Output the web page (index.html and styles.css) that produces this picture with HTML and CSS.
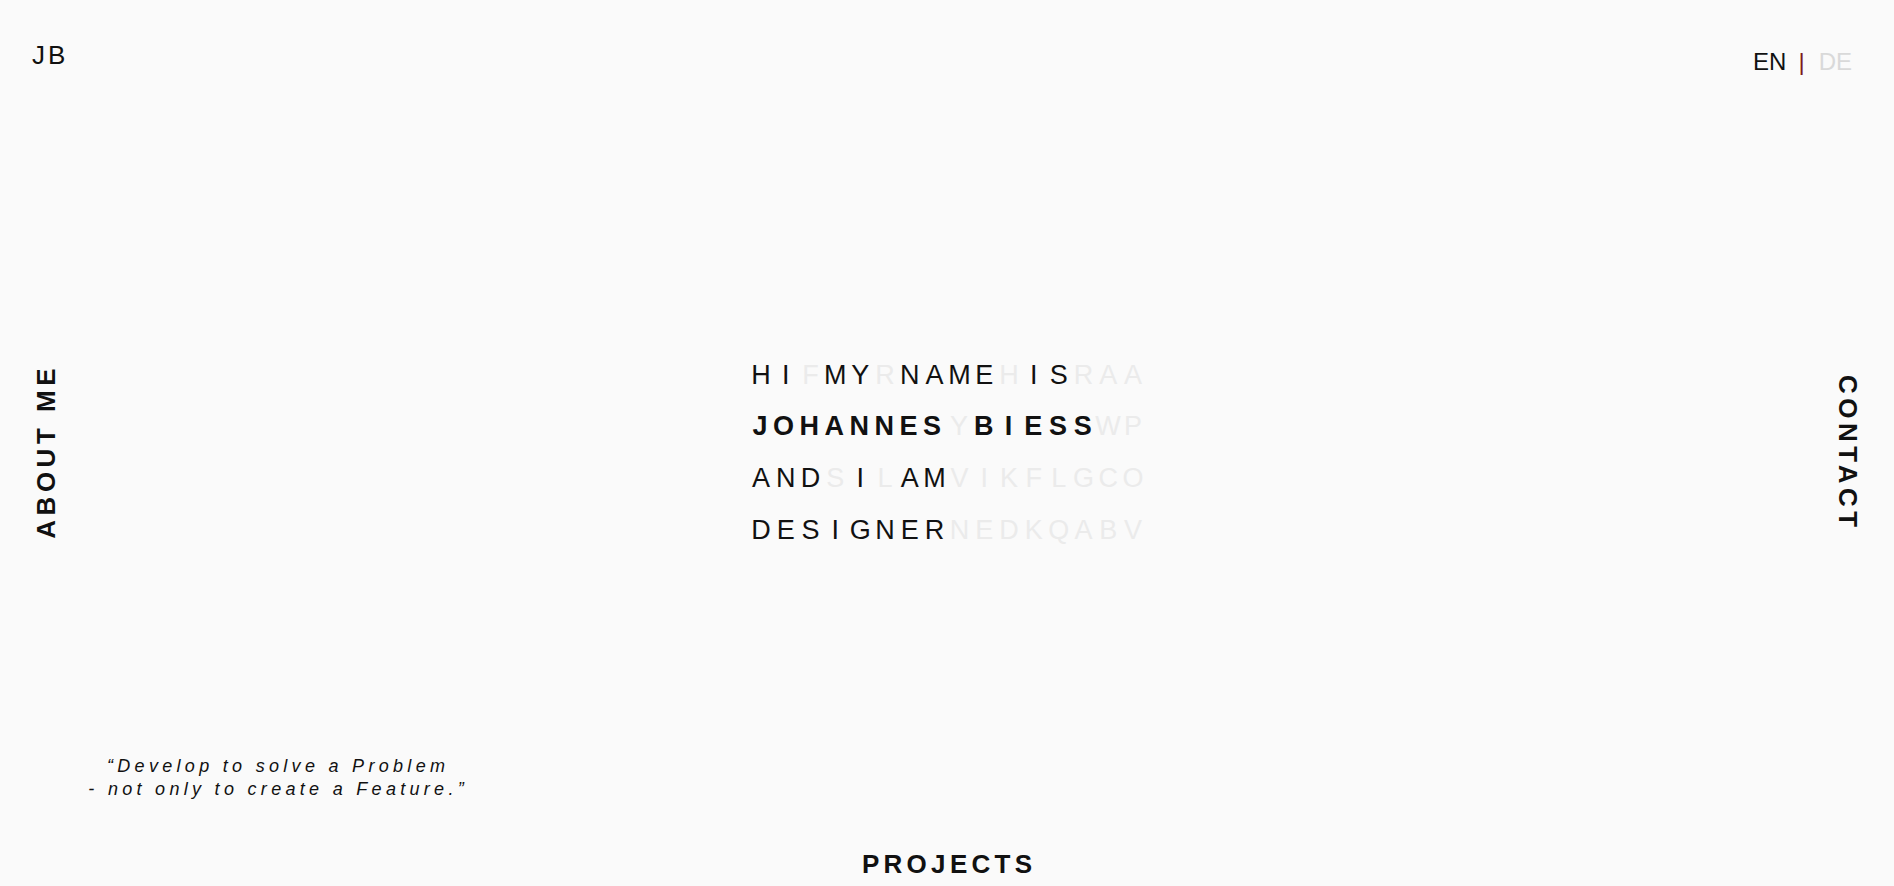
FILE: index.html
```html
<!DOCTYPE html>
<html lang="en">
<head>
<meta charset="utf-8">
<title>Johannes Biess</title>
<link rel="stylesheet" href="styles.css">
</head>
<body>
<div class="page">
  <header class="topbar">
    <a class="logo" href="#">JB</a>
    <div class="lang">
      <span class="lang-on">EN</span>
      <span class="lang-sep">|</span>
      <span class="lang-off">DE</span>
    </div>
  </header>

  <main class="stage">
    <a class="side side-left" href="#">ABOUT ME</a>

    <section class="hero">
      <div class="row">
        <span>H</span><span>I</span><span class="off">F</span><span>M</span><span>Y</span><span class="off">R</span><span>N</span><span>A</span><span>M</span><span>E</span><span class="off">H</span><span>I</span><span>S</span><span class="off">R</span><span class="off">A</span><span class="off">A</span>
      </div>
      <div class="row">
        <span class="name">JOHANNES</span><span class="off">Y</span><span class="bold">B</span><span class="bold">I</span><span class="bold">E</span><span class="bold">S</span><span class="bold">S</span><span class="off">W</span><span class="off">P</span>
      </div>
      <div class="row">
        <span>A</span><span>N</span><span>D</span><span class="off">S</span><span>I</span><span class="off">L</span><span>A</span><span>M</span><span class="off">V</span><span class="off">I</span><span class="off">K</span><span class="off">F</span><span class="off">L</span><span class="off">G</span><span class="off">C</span><span class="off">O</span>
      </div>
      <div class="row">
        <span>D</span><span>E</span><span>S</span><span>I</span><span>G</span><span>N</span><span>E</span><span>R</span><span class="off">N</span><span class="off">E</span><span class="off">D</span><span class="off">K</span><span class="off">Q</span><span class="off">A</span><span class="off">B</span><span class="off">V</span>
      </div>
    </section>

    <a class="side side-right" href="#">CONTACT</a>

    <p class="quote">“Develop to solve a Problem<br>- not only to create a Feature.”</p>
  </main>

  <footer class="bottom">
    <a class="projects" href="#">PROJECTS</a>
  </footer>
</div>
</body>
</html>
```

FILE: styles.css
```css
html, body {
  margin: 0;
  padding: 0;
}

body {
  background: #fafafa;
  color: #111;
  font-family: "Liberation Sans", Arial, Helvetica, sans-serif;
}

a {
  color: inherit;
  text-decoration: none;
}

.page {
  height: 100vh;
  display: flex;
  flex-direction: column;
  overflow: hidden;
}

/* top bar */
.topbar {
  height: 101px;
  box-sizing: border-box;
  padding: 41px 42px 0 32px;
  display: flex;
  justify-content: space-between;
  align-items: flex-start;
  flex: none;
}

.logo {
  font-size: 26px;
  line-height: 28px;
  letter-spacing: 3px;
}

.lang {
  display: flex;
  align-items: baseline;
  gap: 12px;
  margin-top: 7px;
  font-size: 24px;
  line-height: 28px;
}

.lang-on {
  color: #111;
}

.lang-sep {
  color: #7a1c1c;
  margin-right: 2px;
}

.lang-off {
  color: #d9d9d9;
}

/* middle stage */
.stage {
  flex: 1;
  display: grid;
  grid-template-columns: 92px 1fr 92px;
  grid-template-rows: 1fr auto;
}

.side {
  grid-row: 1 / 3;
  align-self: center;
  justify-self: center;
  writing-mode: vertical-rl;
  font-weight: 700;
  font-size: 26px;
  line-height: 30px;
  letter-spacing: 4.5px;
}

.side-left {
  grid-column: 1;
  transform: rotate(180deg);
  margin-bottom: 4px;
}

.side-right {
  grid-column: 3;
}

.hero {
  grid-column: 2;
  grid-row: 1 / 3;
  align-self: center;
  justify-self: center;
  width: 397px;
}

.row {
  display: grid;
  grid-template-columns: repeat(16, 1fr);
  height: 51.7px;
  line-height: 51.7px;
  font-size: 27px;
  text-align: center;
  color: #111;
}

.row .off {
  color: #ebebeb;
}

.row .bold {
  font-weight: 700;
}

.row .name {
  grid-column: 1 / span 8;
  justify-self: start;
  margin-left: 4px;
  font-weight: 700;
  letter-spacing: 5.5px;
}

.quote {
  grid-column: 1 / 3;
  grid-row: 2;
  justify-self: start;
  width: 552px;
  box-sizing: border-box;
  padding-left: 4.3px;
  margin: 0 0 4px;
  font-style: italic;
  font-size: 18px;
  line-height: 23px;
  letter-spacing: 4.3px;
  text-align: center;
  color: #111;
}

/* bottom */
.bottom {
  height: 81px;
  flex: none;
  display: flex;
  justify-content: center;
  align-items: flex-end;
}

.projects {
  font-weight: 700;
  font-size: 26px;
  line-height: 30px;
  letter-spacing: 4.3px;
  padding-left: 4.3px;
  margin-bottom: 7px;
}
```
